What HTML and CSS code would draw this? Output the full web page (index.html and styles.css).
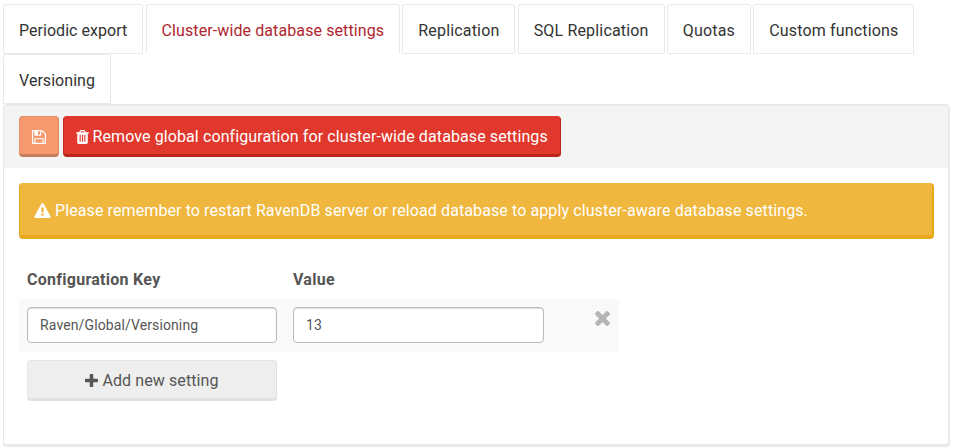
FILE: index.html
```html
<!DOCTYPE html>
<html lang="en">
<head>
<meta charset="utf-8">
<title>Cluster-wide database settings</title>
<link rel="stylesheet" href="styles.css">
</head>
<body>
<nav class="tabs">
  <a class="tab">Periodic export</a>
  <a class="tab active">Cluster-wide database settings</a>
  <a class="tab">Replication</a>
  <a class="tab">SQL Replication</a>
  <a class="tab">Quotas</a>
  <a class="tab">Custom functions</a>
  <a class="tab">Versioning</a>
</nav>
<main class="panel">
  <div class="toolbar">
    <button class="btn save" aria-label="Save"><svg class="i-save" viewBox="0 128 1536 1536"><path d="M384 1536h768v-384h-768v384zm896 0h128v-896q0-14-10-38.500t-20-34.500l-281-281q-10-10-34-20t-39-10v416q0 40-28 68t-68 28h-576q-40 0-68-28t-28-68v-416h-128v1280h128v-416q0-40 28-68t68-28h832q40 0 68 28t28 68v416zm-384-928v-320q0-13-9.500-22.500t-22.500-9.500h-192q-13 0-22.500 9.500t-9.500 22.500v320q0 13 9.500 22.500t22.500 9.500h192q13 0 22.500-9.500t9.500-22.500zm640 32v928q0 40-28 68t-68 28h-1344q-40 0-68-28t-28-68v-1344q0-40 28-68t68-28h928q40 0 88 20t76 48l280 280q28 28 48 76t20 88z"/></svg></button>
    <button class="btn remove"><svg class="i-trash" viewBox="192 128 1408 1536"><path d="M704 1376v-704q0-14-9-23t-23-9h-64q-14 0-23 9t-9 23v704q0 14 9 23t23 9h64q14 0 23-9t9-23zm256 0v-704q0-14-9-23t-23-9h-64q-14 0-23 9t-9 23v704q0 14 9 23t23 9h64q14 0 23-9t9-23zm256 0v-704q0-14-9-23t-23-9h-64q-14 0-23 9t-9 23v704q0 14 9 23t23 9h64q14 0 23-9t9-23zm-544-992h448l-48-117q-7-9-17-11h-317q-10 2-17 11zm928 32v64q0 14-9 23t-23 9h-96v948q0 83-47 143.500t-113 60.500h-832q-66 0-113-58.500t-47-141.500v-952h-96q-14 0-23-9t-9-23v-64q0-14 9-23t23-9h309l70-167q15-37 54-63t79-26h320q40 0 79 26t54 63l70 167h309q14 0 23 9t9 23z"/></svg><span>Remove global configuration for cluster-wide database settings</span></button>
  </div>
  <div class="content">
    <div class="alert"><svg class="i-warn" viewBox="0 0 1792 1664"><path d="M1024 1375v-190q0-14-9.500-23.500t-22.500-9.500h-192q-13 0-22.500 9.500t-9.500 23.500v190q0 14 9.500 23.500t22.500 9.500h192q13 0 22.500-9.500t9.500-23.500zm-2-374l18-459q0-12-10-19-13-11-24-11h-220q-11 0-24 11-10 7-10 21l17 457q0 10 10 16.500t24 6.500h185q14 0 23.500-6.500t10.500-16.500zm-14-934l768 1408q35 63-2 126-17 29-46.500 46t-63.500 17h-1536q-34 0-63.500-17t-46.500-46q-37-63-2-126l768-1408q17-31 47-49t65-18 65 18 47 49z"/></svg><span>Please remember to restart RavenDB server or reload database to apply cluster-aware database settings.</span></div>
    <div class="settings">
      <div class="row head"><span>Configuration Key</span><span>Value</span></div>
      <div class="row entry">
        <input type="text" aria-label="Configuration Key" value="Raven/Global/Versioning">
        <input type="text" aria-label="Value" value="13">
        <svg class="i-times" viewBox="302 366 1188 1188"><path d="M1490 1322q0 40-28 68l-136 136q-28 28-68 28t-68-28l-294-294-294 294q-28 28-68 28t-68-28l-136-136q-28-28-28-68t28-68l294-294-294-294q-28-28-28-68t28-68l136-136q28-28 68-28t68 28l294 294 294-294q28-28 68-28t68 28l136 136q28 28 28 68t-28 68l-294 294 294 294q28 28 28 68z"/></svg>
      </div>
      <div class="row foot">
        <button class="btn add"><svg class="i-plus" viewBox="192 128 1408 1408"><path d="M1600 736v192q0 40-28 68t-68 28h-416v416q0 40-28 68t-68 28h-192q-40 0-68-28t-28-68v-416h-416q-40 0-68-28t-28-68v-192q0-40 28-68t68-28h416v-416q0-40 28-68t68-28h192q40 0 68 28t28 68v416h416q40 0 68 28t28 68z"/></svg><span>Add new setting</span></button>
      </div>
    </div>
  </div>
</main>
</body>
</html>
```
FILE: styles.css
```css
* { box-sizing: border-box; }
body {
  margin: 0;
  padding: 4px 9px 0 3px;
  height: 448px;
  overflow: hidden;
  background: #fff;
  color: #555;
  font: 16px/20px Roboto, sans-serif;
  letter-spacing: .1px;
}
svg { display: block; flex: none; fill: currentColor; }
.tabs { display: flex; flex-wrap: wrap; column-gap: 2.2px; }
.tab {
  height: 50px;
  padding: 16px 15px 0;
  border: 1px solid #e9e9e9;
  border-radius: 3px 3px 0 0;
  color: #333;
  letter-spacing: .17px;
  white-space: nowrap;
}
.tab:first-child, .tab:last-child { letter-spacing: .04px; }
.tab.active { color: #b0262e; border-bottom-color: transparent; letter-spacing: .1px; }
.panel {
  height: 343px;
  border: 1px solid #e9e9e9;
  border-width: 2px 2px 3px 1px;
  border-radius: 4px;
}
.toolbar {
  display: flex;
  gap: 4px;
  height: 62px;
  padding: 10px 15px 0;
  background: #f4f4f4;
}
.btn {
  display: flex;
  align-items: center;
  justify-content: center;
  gap: 4px;
  height: 41px;
  padding: 3px 12px 0;
  border: 1px solid;
  border-bottom-width: 3px;
  border-radius: 4px;
  font: inherit;
  letter-spacing: inherit;
  white-space: nowrap;
}
.btn svg { margin-top: -1px; }
.save { width: 40px; color: #fff; background: #f6996f; border-color: #e39069 #d8885f #c67d5b #e39069; }
.remove { width: 498px; padding-left: 11.5px; justify-content: flex-start; color: #fff; background: #e0382d; border-color: #e0382d #bd241b #bd241b #c9281f; }
.content { padding: 15px 14px 0 15px; }
.alert {
  display: flex;
  align-items: center;
  gap: 4px;
  height: 56px;
  padding: 3px 15px 0 14px;
  border: 1px solid #e8a81c;
  border-width: 0 2px 4px 1px;
  border-radius: 4px;
  background: #efb73e;
  color: #fff;
}
.settings { width: 600px; margin-top: 20px; }
.row { display: grid; grid-template-columns: 250px 251px 1fr; column-gap: 16px; padding: 0 8px; }
.head { height: 40px; padding-top: 11px; font-weight: 700; letter-spacing: .27px; }
.entry { height: 53px; padding-top: 8px; background: #f9f9f9; }
.entry input {
  width: 100%;
  height: 36px;
  padding: 0 12px;
  border: 1px solid #bbb;
  border-radius: 4px;
  background: #fff;
  box-shadow: inset 0 1px 1px #ddd;
  color: #555;
  font: 14px Roboto, sans-serif;
  letter-spacing: .12px;
}
.foot { padding-top: 8px; }
.add { width: 250px; color: #555; background: #eee; border-color: #e5e5e5 #e0e0e0 #e0e0e0 #e5e5e5; }
.i-save { width: 14px; height: 14px; }
.i-trash { width: 13px; height: 14px; }
.i-warn { width: 17px; height: 15px; }
.i-plus { width: 13px; height: 13px; }
.i-times { width: 15px; height: 15px; justify-self: end; margin: 4px 1px 0 0; color: #b5b5b5; }
```
